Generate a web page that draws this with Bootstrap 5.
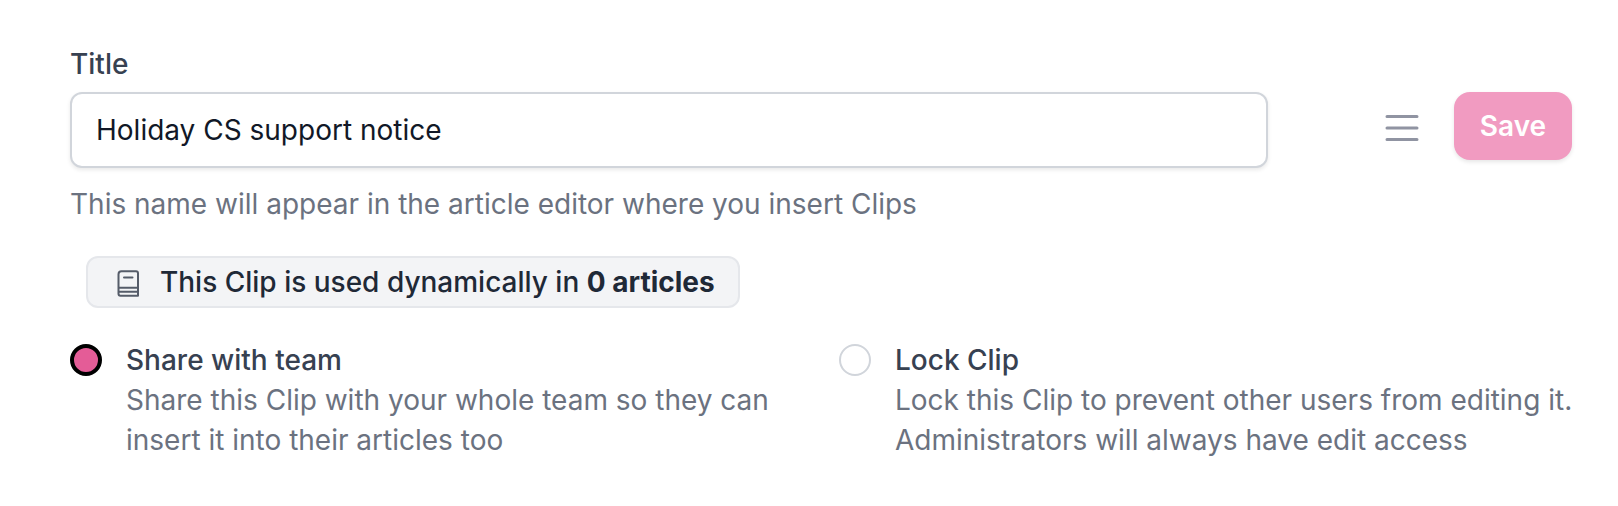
<!DOCTYPE html>
<html lang="en">

<head>
    <meta charset="UTF-8" />
    <meta name="viewport" content="width=device-width, initial-scale=1.0" />
    <title>Edit Clip</title>
    <link href="https://cdn.jsdelivr.net/npm/bootstrap@5.3.0/dist/css/bootstrap.min.css" rel="stylesheet" />
    <style>
        body {
            font-family: Inter, "Liberation Sans", sans-serif;
            font-size: 28px;
            line-height: 40px;
            color: #6b7280;
            background: #fff;
        }

        .clip-form {
            padding: 44px 46px 0 70px;
        }

        .clip-label {
            color: #374151;
            font-weight: 500;
        }

        .title-field {
            width: 1198px;
        }

        .title-field .form-control {
            height: 76px;
            padding: 0 24px;
            font-size: 28px;
            color: #111827;
            border: 2px solid #d1d5db;
            border-radius: 12px;
            box-shadow: 0 2px 4px rgba(0, 0, 0, .09);
        }

        .form-actions {
            margin-top: 48px;
            gap: 29px;
        }

        .save-btn {
            width: 118px;
            height: 68px;
            padding: 0;
            font-size: 28px;
            font-weight: 600;
            color: #fff;
            background: #f19bc1;
            border: 0;
            border-radius: 16px;
            box-shadow: 0 2px 4px rgba(0, 0, 0, .1);
        }

        .usage-note {
            width: 654px;
            height: 52px;
            margin: 32px 0 0 16px;
            padding-left: 24px;
            gap: 18px;
            color: #1f2937;
            font-weight: 500;
            background: #f3f4f6;
            border: 2px solid #e5e7eb;
            border-radius: 12px;
        }

        .clip-options {
            display: grid;
            grid-template-columns: 737px 737px;
            gap: 32px;
            margin-top: 32px;
        }

        .clip-options .form-check-input {
            width: 32px;
            height: 32px;
            margin: 4px 24px 0 0;
            border: 2px solid #d1d5db;
        }

        .clip-options .form-check-input:checked {
            background: #e45c97;
            border: 4px solid #000;
        }
    </style>
</head>

<body>

    <form class="clip-form">
        <div class="d-flex justify-content-between align-items-start">
            <div class="title-field">
                <label for="titleInput" class="clip-label d-block mb-2">Title</label>
                <input type="text" id="titleInput" class="form-control" value="Holiday CS support notice" />
                <div class="mt-3">This name will appear in the article editor where you insert Clips</div>
            </div>
            <div class="form-actions d-flex">
                <svg width="46" height="72" viewBox="0 0 46 72" fill="none" stroke="#9094a2" stroke-width="3"
                    stroke-linecap="round">
                    <path d="M8 24.4h30M8 36h30M8 47.6h30" />
                </svg>
                <button type="button" class="btn save-btn">Save</button>
            </div>
        </div>

        <div class="usage-note d-flex align-items-center">
            <svg width="30" height="32" viewBox="0 0 30 32" fill="none" stroke="#555c69" stroke-width="2"
                stroke-linecap="round" stroke-linejoin="round">
                <path d="M26 21.8V7.2a2 2 0 0 0-2-2H9.5a3 3 0 0 0-3 3v19.6a2 2 0 0 0 2 2H26v-8H6.5M7 25.8h18.5M12 11.4h8.5" />
            </svg>
            <span>This Clip is used dynamically in <strong>0 articles</strong></span>
        </div>

        <div class="clip-options">
            <div class="d-flex">
                <input class="form-check-input flex-shrink-0" type="radio" id="shareClip" checked />
                <div>
                    <label for="shareClip" class="clip-label d-block">Share with team</label>
                    <div>Share this Clip with your whole team so they can<br />insert it into their articles too</div>
                </div>
            </div>
            <div class="d-flex">
                <input class="form-check-input flex-shrink-0" type="radio" id="lockClip" />
                <div>
                    <label for="lockClip" class="clip-label d-block">Lock Clip</label>
                    <div class="text-nowrap">Lock this Clip to prevent other users from editing it.<br />Administrators
                        will always have edit access</div>
                </div>
            </div>
        </div>
    </form>

    <script src="https://cdn.jsdelivr.net/npm/bootstrap@5.3.0/dist/js/bootstrap.bundle.min.js"></script>
</body>

</html>
